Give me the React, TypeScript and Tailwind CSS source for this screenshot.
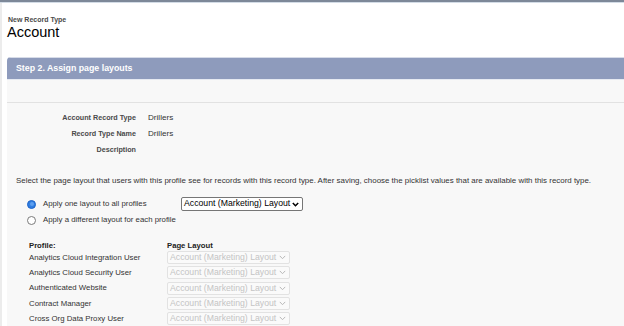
import React from "react";

function Chevron({ color, bold }: { color: string; bold?: boolean }) {
  return (
    <svg width="7" height="5" viewBox="0 0 7 5" className="shrink-0">
      <path d="M0.8 0.9 L3.5 3.7 L6.2 0.9" fill="none" stroke={color} strokeWidth={bold ? 1.5 : 1} />
    </svg>
  );
}

function Radio({ checked }: { checked?: boolean }) {
  if (checked) {
    return (
      <span className="w-[9px] h-[9px] rounded-full bg-[#2f7de1] border border-[#1f65c8] flex items-center justify-center shrink-0">
        <span className="w-[4px] h-[4px] rounded-full bg-[#5ea0f0]" />
      </span>
    );
  }
  return <span className="w-[9px] h-[9px] rounded-full bg-white border border-[#7a7a7a] shrink-0" />;
}

export default function App() {
  const profiles = [
    "Analytics Cloud Integration User",
    "Analytics Cloud Security User",
    "Authenticated Website",
    "Contract Manager",
    "Cross Org Data Proxy User",
  ];
  const details: [string, string][] = [
    ["Account Record Type", "Drillers"],
    ["Record Type Name", "Drillers"],
    ["Description", ""],
  ];
  return (
    <div className="w-[624px] h-[326px] overflow-hidden bg-white flex flex-col font-['Liberation_Sans',Arial,sans-serif] text-[#333]">
      <div className="h-[2px] bg-[#7d8898] shrink-0" />
      <div className="h-px bg-[#d3dce6] shrink-0" />
      <div className="flex-1 flex">
        <div className="w-[2px] bg-[#ececec] shrink-0" />
        <div className="flex-1 pl-[5px] flex flex-col">
          <div className="pt-[12px] pl-[1px]">
            <div className="text-[7px] leading-[9px] font-bold text-[#4a4a4a]">New Record Type</div>
            <div className="text-[14.5px] leading-[16px] text-black -ml-[1px]">Account</div>
          </div>
          <div className="mt-[17px] flex-1 flex flex-col rounded-tl-[4px] overflow-hidden">
            <div className="border-t border-[#d7dce8] h-[22px] bg-[#8e9bbc] flex items-center pl-[9px] text-white font-bold text-[8.8px]">
              Step 2. Assign page layouts
            </div>
            <div className="h-px bg-[#e5e9f1]" />
            <div className="flex-1 bg-[#f8f8f8] flex flex-col">
              <div className="h-[22px]" />
              <div className="h-px bg-[#e2e2e2]" />
              <div className="pt-[7px] flex flex-col">
                {details.map(([l, v]) => (
                  <div key={l} className="flex items-center h-[16px]">
                    <div className="w-[129px] text-right font-bold text-[7.2px] text-[#4a4a4a]">{l}</div>
                    <div className="ml-[12px] text-[8.1px]">{v}</div>
                  </div>
                ))}
              </div>
              <div className="mt-[17px] pl-[9px] text-[7.93px] leading-[12px] whitespace-nowrap">
                Select the page layout that users with this profile see for records with this record type. After saving, choose the picklist values that are available with this record type.
              </div>
              <div className="mt-[10px] pl-[20px] flex items-center h-[14px]">
                <Radio checked />
                <span className="ml-[7px] w-[138px] text-[7.8px]">Apply one layout to all profiles</span>
                <div className="w-[122px] h-[14px] border border-[#767676] rounded-[2px] bg-white flex items-center justify-between pl-[2px] pr-[3px] text-[8.7px] text-black">
                  <span>Account (Marketing) Layout</span>
                  <Chevron color="#000" bold />
                </div>
              </div>
              <div className="mt-[3px] pl-[20px] flex items-center h-[12px]">
                <Radio />
                <span className="ml-[7px] text-[7.8px]">Apply a different layout for each profile</span>
              </div>
              <div className="mt-[15px] pl-[22px] flex flex-col">
                <div className="flex items-center h-[9px] font-bold text-[7.7px] text-[#222]">
                  <span className="w-[138px]">Profile:</span>
                  <span>Page Layout</span>
                </div>
                {profiles.map((p) => (
                  <div key={p} className="flex items-center h-[15.25px]">
                    <span className="w-[138px] text-[7.8px]">{p}</span>
                    <div className="w-[123px] h-[13px] border border-[#e2e2e2] rounded-[2px] bg-[#fafafa] flex items-center justify-between pl-[2px] pr-[3px] text-[8.7px] text-[#c4c4c4]">
                      <span>Account (Marketing) Layout</span>
                      <Chevron color="#b8b8b8" />
                    </div>
                  </div>
                ))}
              </div>
            </div>
          </div>
        </div>
      </div>
    </div>
  );
}
